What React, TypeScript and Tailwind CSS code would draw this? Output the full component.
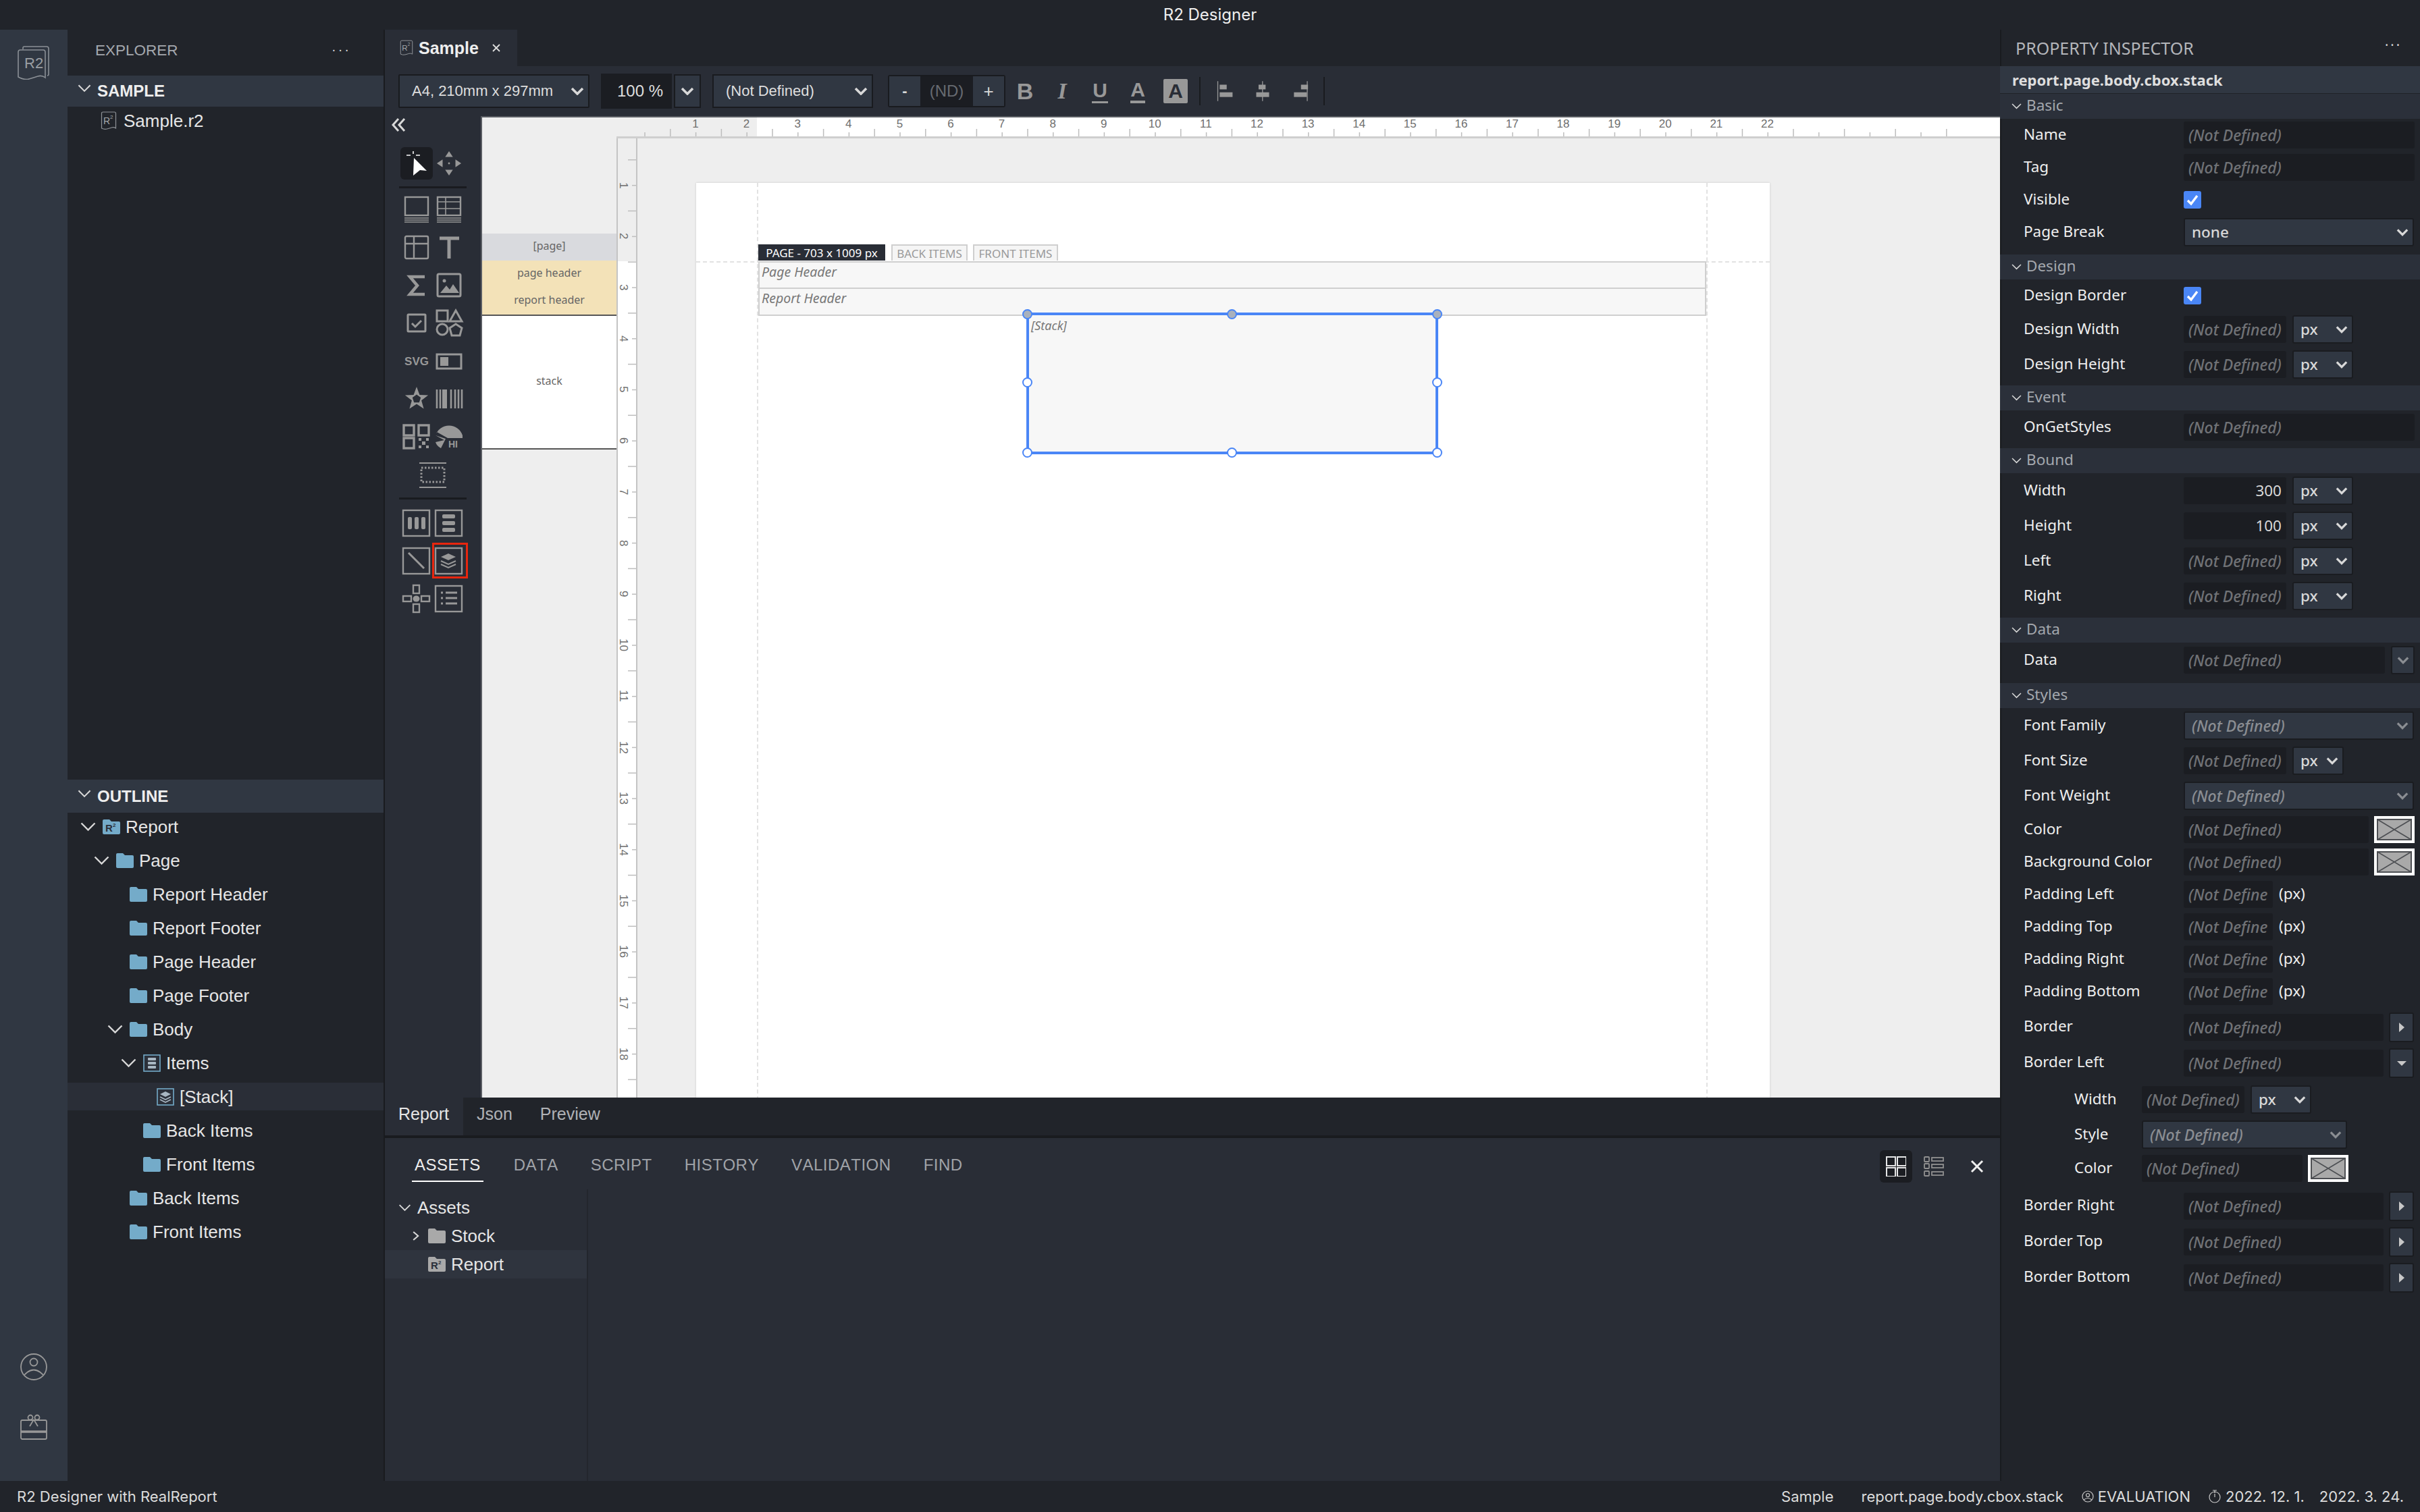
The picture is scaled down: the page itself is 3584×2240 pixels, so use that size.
import type { ReactNode } from 'react';

// --- small drawings ---

function Chevron({ className = 'w-[20px] h-[12px] text-[#d8d8d8]', width = 3.6 }: { className?: string; width?: number }) {
  return (
    <svg viewBox="0 0 20 12" className={className} fill="none" stroke="currentColor" strokeWidth={width}>
      <path d="M2 2l8 8 8-8" />
    </svg>
  );
}

function TreeArrow({ open = true, className = 'w-[23px] h-[14px]' }: { open?: boolean; className?: string }) {
  return (
    <svg viewBox="0 0 23 14" className={`${className} text-[#d8d8d8]`} fill="none" stroke="currentColor" strokeWidth={2.4}>
      {open ? <path d="M1.5 1.5l10 10 10-10" /> : <path d="M6 0l8 7-8 7" />}
    </svg>
  );
}

function Folder({ color = '#74abc9' }: { color?: string }) {
  return (
    <svg viewBox="0 0 26 22" className="w-[26px] h-[22px] shrink-0">
      <path d="M0 2q0-2 2-2h8l3 3h11q2 0 2 2v15q0 2-2 2H2q-2 0-2-2z" fill={color} />
    </svg>
  );
}

function ReportFolder({ color = '#74abc9' }: { color?: string }) {
  return (
    <svg viewBox="0 0 26 22" className="w-[26px] h-[22px] shrink-0">
      <path d="M0 2q0-2 2-2h8l3 3h11q2 0 2 2v15q0 2-2 2H2q-2 0-2-2z" fill={color} />
      <text x="4" y="18" fontSize="15" fontWeight="700" fill="#2b303a" fontFamily="Liberation Sans">R</text>
      <text x="15" y="11" fontSize="8" fontWeight="700" fill="#2b303a" fontFamily="Liberation Sans">2</text>
    </svg>
  );
}

function ItemsIcon() {
  return (
    <svg viewBox="0 0 26 26" className="w-[26px] h-[26px] shrink-0" fill="none">
      <rect x="1" y="1" width="24" height="24" stroke="#74abc9" strokeWidth="1.6" fill="#2b303a" />
      <g fill="#a8b6c2">
        <rect x="7" y="5" width="12" height="4" rx="1" />
        <rect x="7" y="11" width="12" height="4" rx="1" />
        <rect x="7" y="17" width="12" height="4" rx="1" />
      </g>
    </svg>
  );
}

function StackIcon() {
  return (
    <svg viewBox="0 0 26 26" className="w-[26px] h-[26px] shrink-0" fill="none">
      <rect x="1" y="1" width="24" height="24" stroke="#74abc9" strokeWidth="1.6" fill="#2b303a" />
      <path d="M13 5l8 4-8 4-8-4z" fill="#a8b6c2" />
      <path d="M5 13l8 4 8-4M5 17l8 4 8-4" stroke="#a8b6c2" strokeWidth="1.6" />
    </svg>
  );
}

function FileIcon({ className = 'w-[24px] h-[28px]' }: { className?: string }) {
  return (
    <svg viewBox="0 0 24 28" className={`${className} shrink-0`} fill="none" stroke="#8f9398" strokeWidth="1.2">
      <path d="M1.5 3q0-2 2-2h17q2 0 2 2v22q-3-2-6-1t-7 2-8-1z" />
      <text x="4" y="19" fontSize="14" fill="#a4a7ab" stroke="none" fontFamily="Liberation Sans">R</text>
      <text x="14" y="11" fontSize="8" fill="#a4a7ab" stroke="none" fontFamily="Liberation Sans">2</text>
    </svg>
  );
}

function Logo() {
  return (
    <svg viewBox="0 0 48 50" className="w-[48px] h-[50px]" fill="none" stroke="#8b9096" strokeWidth="1.6">
      <path d="M8 5V3q0-2 2-2h33q3 0 3 3v38q0 2-2 2" />
      <path d="M1 9q0-3 3-3h34q3 0 3 3v38q-5-4-11-2t-13 4-16-3z" />
      <text x="10" y="33" fontSize="22" fill="#9a9ea3" stroke="none" fontFamily="Liberation Sans">R2</text>
    </svg>
  );
}

const T = ({ children }: { children: ReactNode }) => (
  <svg viewBox="0 0 44 44" className="w-[44px] h-[44px]" fill="none" stroke="#989898" strokeWidth="2.4">
    {children}
  </svg>
);

const toolIcons: ReactNode[] = [
  <T key="band">
    <rect x="5" y="3" width="34" height="27" />
    <path d="M4 34h36M4 37h36M4 40h36" strokeWidth="1.4" />
  </T>,
  <T key="bandgrid">
    <rect x="5" y="3" width="34" height="27" />
    <path d="M5 10h34M17 3v27M5 20h34" strokeWidth="1.6" />
    <path d="M4 34h36M4 37h36M4 40h36" strokeWidth="1.4" />
  </T>,
  <T key="table">
    <rect x="5" y="5" width="34" height="33" rx="2" />
    <path d="M5 16h34M18 5v33" />
  </T>,
  <T key="text">
    <path d="M8 8h29M22 8v30" strokeWidth="5" />
  </T>,
  <T key="sum">
    <path d="M34 9H12l11 13-11 13h22" strokeWidth="4.5" />
  </T>,
  <T key="image">
    <rect x="5" y="5" width="34" height="33" rx="2" strokeWidth="3" />
    <circle cx="15" cy="15" r="2.5" fill="#989898" stroke="none" />
    <path d="M9 33l9-11 5 6 5-8 9 13z" fill="#989898" stroke="none" />
  </T>,
  <T key="check">
    <rect x="9" y="9" width="26" height="25" rx="1" strokeWidth="3" />
    <path d="M15 22l5 5 9-9" strokeWidth="3" />
  </T>,
  <T key="shapes">
    <rect x="4" y="3" width="16" height="16" strokeWidth="3" />
    <path d="M32 3l9 16H23z" strokeWidth="3" />
    <circle cx="12" cy="31" r="8" strokeWidth="3" />
    <path d="M32 23l9 6-3 11H26l-3-11z" strokeWidth="3" />
  </T>,
  <T key="svg">
    <text x="22" y="28" textAnchor="middle" fontSize="17" fontWeight="700" fill="#989898" stroke="none" fontFamily="Liberation Sans">SVG</text>
  </T>,
  <T key="toggle">
    <rect x="4" y="12" width="36" height="21" strokeWidth="3" />
    <rect x="9" y="16" width="12" height="13" fill="#989898" stroke="none" />
  </T>,
  <T key="star">
    <path d="M22 4l4.400 11.900 12.700.5-10 7.900 3.500 12.300L22 29.500l-10.600 7.100 3.500-12.300-10-7.900 12.700-.5z" fill="#989898" stroke="none" />
    <path d="M22 15.500l6.200 4.500-2.400 7.300h-7.600L15.800 20z" fill="#292d36" stroke="none" />
  </T>,
  <T key="barcode">
    <path d="M4 8v28M9 8v28M25 8v28M31 8v28M36 8v28M41 8v28" strokeWidth="2.600" />
    <path d="M15.500 8v28" strokeWidth="7" />
  </T>,
  <T key="qr">
    <rect x="3" y="5" width="15" height="15" strokeWidth="3.400" />
    <rect x="25" y="5" width="15" height="15" strokeWidth="3.400" />
    <rect x="3" y="24" width="15" height="15" strokeWidth="3.400" />
    <path d="M25 24h4v4h-4zM36 24h4v4h-4zM30 29h5v5h-5zM25 35h4v4h-4zM36 35h4v4h-4z" fill="#989898" stroke="none" />
  </T>,
  <T key="chart">
    <path d="M2 20A21 21 0 0 1 42 20L42 24H20L4 15z" fill="#989898" stroke="none" />
    <path d="M2 20l15 5-7 14q-6-3-8-9l13-3z" fill="#989898" stroke="none" />
    <text x="21" y="38" fontSize="14" fontWeight="700" fill="#989898" stroke="none" fontFamily="Liberation Sans">HI</text>
  </T>,
];

const layoutIcons: ReactNode[] = [
  <T key="cols">
    <rect x="2" y="3" width="39" height="38" strokeWidth="2.400" />
    <rect x="9" y="13" width="6" height="18" rx="2" fill="#989898" stroke="none" />
    <rect x="19" y="13" width="6" height="18" rx="2" fill="#989898" stroke="none" />
    <rect x="29" y="13" width="6" height="18" rx="2" fill="#989898" stroke="none" />
  </T>,
  <T key="rows">
    <rect x="2" y="3" width="39" height="38" strokeWidth="2.400" />
    <rect x="12" y="9" width="19" height="6" rx="2" fill="#989898" stroke="none" />
    <rect x="12" y="19" width="19" height="6" rx="2" fill="#989898" stroke="none" />
    <rect x="12" y="29" width="19" height="6" rx="2" fill="#989898" stroke="none" />
  </T>,
  <T key="line">
    <rect x="2" y="3" width="39" height="38" strokeWidth="2.400" />
    <path d="M10 10l23 23" strokeWidth="3" />
  </T>,
  <T key="stack">
    <rect x="2" y="3" width="39" height="38" strokeWidth="2.400" />
    <path d="M21 11l11 5-11 5-11-5z" fill="#989898" stroke="none" />
    <path d="M10 22l11 5 11-5M10 27l11 5 11-5" strokeWidth="2" />
  </T>,
  <T key="free">
    <rect x="17" y="2" width="9" height="12" strokeWidth="2.400" />
    <rect x="17" y="30" width="9" height="12" strokeWidth="2.400" />
    <rect x="2" y="18" width="12" height="8" strokeWidth="2.400" />
    <rect x="29" y="18" width="12" height="8" strokeWidth="2.400" />
    <ellipse cx="21.500" cy="22" rx="5" ry="4.500" fill="#989898" stroke="none" />
  </T>,
  <T key="list">
    <rect x="2" y="3" width="39" height="38" strokeWidth="2.400" />
    <path d="M10 13h3M10 21h3M10 29h3" strokeWidth="3" />
    <path d="M17 13h17M17 21h17M17 29h17" strokeWidth="3" />
  </T>,
];

// --- property inspector ---

// clip is only for the narrow inputs, where the reference cuts the placeholder too
function Field({ className, right, muted = true, clip, children = '(Not Defined)' }: { className: string; right?: boolean; muted?: boolean; clip?: boolean; children?: ReactNode }) {
  return (
    <div className={`${className} h-[40px] rounded-[3px] bg-[#1b1d22] px-[7px] flex items-center`}>
      <div className={`w-full whitespace-nowrap leading-[28px] ${clip ? 'overflow-hidden' : ''} ${right ? 'text-right' : ''} ${muted ? 'italic font-medium text-[23px] text-[#707276]' : 'text-[#d8d8d8]'}`}>
        {children}
      </div>
    </div>
  );
}

function Select({ className, muted, children }: { className: string; muted?: boolean; children: ReactNode }) {
  return (
    <div className={`${className} h-[42px] shrink-0 border-2 border-[#1a1c20] rounded-[3px] bg-[#303742] pl-[10px] pr-[6px] flex items-center justify-between`}>
      <span className={muted ? 'italic font-medium text-[23px] text-[#8a8d92]' : 'font-medium text-[#d8d8d8]'}>{children}</span>
      <Chevron className={muted ? 'w-[18px] h-[12px] text-[#8a8d92]' : 'w-[18px] h-[12px] text-[#d8d8d8]'} />
    </div>
  );
}

function Unit() {
  return <Select className="w-[90px] ml-[9px]">px</Select>;
}

function Swatch({ className = 'ml-[8px]' }: { className?: string }) {
  return (
    <div className={`${className} w-[60px] h-[40px] shrink-0 border-[4px] border-white bg-[#a9a9a9]`}>
      <svg viewBox="0 0 52 32" preserveAspectRatio="none" className="w-full h-full" fill="none" stroke="#4d4f53" strokeWidth="1.600">
        <rect x="1" y="1" width="50" height="30" strokeWidth="2" />
        <path d="M1 1l50 30M51 1L1 31" />
      </svg>
    </div>
  );
}

function Check() {
  return (
    <div className="w-[26px] h-[26px] rounded-[3px] bg-[#4a86f6] flex items-center justify-center">
      <svg viewBox="0 0 20 20" className="w-[20px] h-[20px]" fill="none" stroke="white" strokeWidth="3.400">
        <path d="M3 11l5 5 9-12" />
      </svg>
    </div>
  );
}

function Row({ label, h = 'h-[48px]', sub, children }: { label: string; h?: string; sub?: boolean; children?: ReactNode }) {
  return (
    <div className={`${h} flex items-center pr-[8px] ${sub ? 'pl-[110px]' : 'pl-[35px]'}`}>
      <div className={`${sub ? 'w-[100px]' : 'w-[237px]'} shrink-0 -mt-[2px] text-[#eeeeee]`}>{label}</div>
      {children}
    </div>
  );
}

function Section({ title, gap, children }: { title: string; gap: string; children: ReactNode }) {
  return (
    <div className={gap}>
      <div className="h-[37px] bg-[#2b303a] flex items-center pl-[17px] text-[#a4a8ae]">
        <TreeArrow className="w-[15px] h-[9px] mr-[7px]" />
        <span className="-mt-[3px]">{title}</span>
      </div>
      {children}
    </div>
  );
}

function BorderBtn({ open }: { open?: boolean }) {
  return (
    <div className="w-[37px] h-[44px] ml-[8px] shrink-0 rounded-[3px] border-2 border-[#1a1c20] bg-[#303742] flex items-center justify-center">
      <svg viewBox="0 0 14 14" className="w-[14px] h-[14px]" fill="#c8c8c8">
        {open ? <path d="M0 4h14L7 11z" /> : <path d="M3 0l8 7-8 7z" />}
      </svg>
    </div>
  );
}

function BorderRow({ label, open }: { label: string; open?: boolean }) {
  return (
    <Row label={label} h="h-[53px]">
      <Field className="w-[296px]" />
      <BorderBtn open={open} />
    </Row>
  );
}

function PaddingRow({ label }: { label: string }) {
  return (
    <Row label={label}>
      <Field className="w-[132px]" clip />
      <span className="ml-[9px] -mt-[2px] text-[#eeeeee]">(px)</span>
    </Row>
  );
}

function UnitRow({ label, value }: { label: string; value?: string }) {
  return (
    <Row label={label} h="h-[52px]">
      {value ? (
        <Field className="w-[152px]" right muted={false}>{value}</Field>
      ) : (
        <Field className="w-[152px]" clip />
      )}
      <Unit />
    </Row>
  );
}

function Inspector() {
  return (
    <div className="w-[622px] shrink-0 flex flex-col shadow-[inset_2px_0_0_#191b1f] font-['Noto_Sans',sans-serif] text-[22.5px] leading-none">
      <div className="h-[54px] flex items-center justify-between pl-[23px] pr-[27px]">
        <span className="text-[25px] text-[#b4b6ba]">PROPERTY INSPECTOR</span>
        <span className="text-[#d8d8d8] tracking-[3px] text-[20px] -mt-[8px]">···</span>
      </div>
      <div className="h-[41px] bg-[#303742] border-b border-[#1f2228] flex items-center pl-[18px] text-[22px] font-bold text-[#dedede]">
        report.page.body.cbox.stack
      </div>
      <Section title="Basic" gap="pb-[9px]">
        <Row label="Name"><Field className="w-[342px]" /></Row>
        <Row label="Tag"><Field className="w-[342px]" /></Row>
        <Row label="Visible"><Check /></Row>
        <Row label="Page Break"><Select className="w-[341px]">none</Select></Row>
      </Section>
      <Section title="Design" gap="pb-[5px]">
        <Row label="Design Border"><Check /></Row>
        <UnitRow label="Design Width" />
        <UnitRow label="Design Height" />
      </Section>
      <Section title="Event" gap="pb-[6px]">
        <Row label="OnGetStyles" h="h-[50px]"><Field className="w-[342px]" /></Row>
      </Section>
      <Section title="Bound" gap="pb-[6px]">
        <UnitRow label="Width" value="300" />
        <UnitRow label="Height" value="100" />
        <UnitRow label="Left" />
        <UnitRow label="Right" />
      </Section>
      <Section title="Data" gap="pb-[8px]">
        <Row label="Data" h="h-[52px]">
          <Field className="w-[298px]" />
          <div className="w-[35px] h-[42px] ml-[9px] shrink-0 rounded-[3px] border-2 border-[#1a1c20] bg-[#303742] flex items-center justify-center">
            <Chevron className="w-[18px] h-[12px] text-[#8a8d92]" />
          </div>
        </Row>
      </Section>
      <Section title="Styles" gap="">
        <Row label="Font Family" h="h-[52px]"><Select className="w-[341px]" muted>(Not Defined)</Select></Row>
        <Row label="Font Size" h="h-[52px]">
          <Field className="w-[152px]" clip />
          <Select className="w-[76px] ml-[9px]">px</Select>
        </Row>
        <Row label="Font Weight" h="h-[52px]"><Select className="w-[341px]" muted>(Not Defined)</Select></Row>
        <Row label="Color"><Field className="w-[274px]" /><Swatch /></Row>
        <Row label="Background Color"><Field className="w-[274px]" /><Swatch /></Row>
        <PaddingRow label="Padding Left" />
        <PaddingRow label="Padding Top" />
        <PaddingRow label="Padding Right" />
        <PaddingRow label="Padding Bottom" />
        <div className="h-[2px]" />
        <BorderRow label="Border" />
        <BorderRow label="Border Left" open />
        <div className="h-[2px]" />
        <Row label="Width" h="h-[52px]" sub>
          <Field className="w-[152px]" clip />
          <Unit />
        </Row>
        <Row label="Style" h="h-[52px]" sub><Select className="w-[304px]" muted>(Not Defined)</Select></Row>
        <Row label="Color" sub><Field className="w-[238px]" /><Swatch /></Row>
        <div className="h-[5px]" />
        <BorderRow label="Border Right" />
        <BorderRow label="Border Top" />
        <BorderRow label="Border Bottom" />
      </Section>
    </div>
  );
}

// --- explorer ---

type Node = { label: string; depth: number; kind: 'folder' | 'report' | 'items' | 'stack'; open?: boolean; active?: boolean };

const outline: Node[] = [
  { label: 'Report', depth: 0, kind: 'report', open: true },
  { label: 'Page', depth: 1, kind: 'folder', open: true },
  { label: 'Report Header', depth: 2, kind: 'folder' },
  { label: 'Report Footer', depth: 2, kind: 'folder' },
  { label: 'Page Header', depth: 2, kind: 'folder' },
  { label: 'Page Footer', depth: 2, kind: 'folder' },
  { label: 'Body', depth: 2, kind: 'folder', open: true },
  { label: 'Items', depth: 3, kind: 'items', open: true },
  { label: '[Stack]', depth: 4, kind: 'stack', active: true },
  { label: 'Back Items', depth: 3, kind: 'folder' },
  { label: 'Front Items', depth: 3, kind: 'folder' },
  { label: 'Back Items', depth: 2, kind: 'folder' },
  { label: 'Front Items', depth: 2, kind: 'folder' },
];

const depthPad = ['pl-[52px]', 'pl-[72px]', 'pl-[92px]', 'pl-[112px]', 'pl-[132px]'];

function OutlineRow({ node }: { node: Node }) {
  return (
    <div className={`h-[41px] mb-[9px] relative flex items-center ${depthPad[node.depth]} ${node.active ? 'bg-[#2a2e37]' : ''}`}>
      {node.open && (
        <span className="absolute -ml-[33px] flex">
          <TreeArrow />
        </span>
      )}
      {node.kind === 'folder' && <Folder />}
      {node.kind === 'report' && <ReportFolder />}
      {node.kind === 'items' && <ItemsIcon />}
      {node.kind === 'stack' && <StackIcon />}
      <span className="ml-[8px] text-[#e6e6e6]">{node.label}</span>
    </div>
  );
}

function Explorer() {
  return (
    <div className="w-[470px] shrink-0 flex flex-col border-r-2 border-[#191b1f] text-[26px] leading-none">
      <div className="h-[68px] flex items-center justify-between pl-[41px] pr-[48px]">
        <span className="text-[22.5px] -mt-[5px] text-[#a4a8ae]">EXPLORER</span>
        <span className="text-[#d8d8d8] tracking-[3px] text-[20px] -mt-[10px]">···</span>
      </div>
      <div className="h-[46px] bg-[#303742] flex items-center pl-[15px] font-bold text-[24px] text-[#eeeeee]">
        <TreeArrow className="w-[20px] h-[12px] mr-[9px] -mt-[8px]" />
        SAMPLE
      </div>
      <div className="h-[997px] pt-[7px] pl-[49px]">
        <div className="flex items-center h-[28px]">
          <FileIcon />
          <span className="ml-[10px] text-[#e6e6e6]">Sample.r2</span>
        </div>
      </div>
      <div className="h-[49px] bg-[#303742] flex items-center pl-[15px] font-bold text-[24px] text-[#eeeeee]">
        <TreeArrow className="w-[20px] h-[12px] mr-[9px] -mt-[8px]" />
        OUTLINE
      </div>
      <div>
        {outline.map((node, i) => (
          <OutlineRow key={i} node={node} />
        ))}
      </div>
    </div>
  );
}

// --- toolbar ---

function ToolGlyph({ children, w = 'w-[56px]' }: { children: ReactNode; w?: string }) {
  return <div className={`${w} h-[50px] flex items-center justify-center text-[#989898]`}>{children}</div>;
}

function AlignIcon({ x }: { x: number }) {
  return (
    <svg viewBox="0 0 30 40" className="w-[26px] h-[36px]" fill="#989898">
      <rect x={x === 0 ? 1 : x === 1 ? 14 : 27} y="3" width="1.500" height="34" />
      <rect x={x === 0 ? 5 : x === 1 ? 8 : 17} y="9" width="12" height="8" />
      <rect x={x === 0 ? 5 : x === 1 ? 4 : 5} y="22" width="22" height="8" />
    </svg>
  );
}

function Toolbar() {
  return (
    <div className="h-[74px] bg-[#292d36] flex items-center pl-[20px] text-[22px] text-[#dedede] leading-none">
      <div className="w-[283px] h-[50px] border-2 border-[#191b1f] bg-[#303742] rounded-[2px] pl-[18px] pr-[6px] flex items-center justify-between">
        A4, 210mm x 297mm
        <Chevron />
      </div>
      <div className="w-[105px] h-[52px] ml-[17px] bg-[#1b1d22] flex items-center pl-[24px] text-[24px]">100 %</div>
      <div className="w-[40px] h-[50px] ml-[3px] border-2 border-[#191b1f] bg-[#303742] flex items-center justify-center">
        <Chevron />
      </div>
      <div className="w-[238px] h-[50px] ml-[17px] border-2 border-[#191b1f] bg-[#303742] pl-[18px] pr-[6px] flex items-center justify-between">
        (Not Defined)
        <Chevron />
      </div>
      <div className="w-[174px] h-[48px] ml-[22px] border-2 border-[#191b1f] rounded-[3px] bg-[#1b1d22] flex items-center">
        <div className="w-[46px] h-full bg-[#303742] flex items-center justify-center font-bold text-[#d8d8d8]">-</div>
        <div className="flex-1 text-center text-[#666a70] text-[24px]">(ND)</div>
        <div className="w-[46px] h-full bg-[#303742] flex items-center justify-center text-[26px] text-[#d8d8d8]">+</div>
      </div>
      <ToolGlyph><span className="text-[34px] font-bold ml-[2px]">B</span></ToolGlyph>
      <ToolGlyph><span className="text-[34px] font-bold italic font-['Liberation_Serif',serif]">I</span></ToolGlyph>
      <ToolGlyph><span className="text-[30px] font-bold border-b-[3px] border-[#989898] px-[1px] leading-[32px]">U</span></ToolGlyph>
      <ToolGlyph><span className="text-[30px] font-bold border-b-[4px] border-[#989898] leading-[32px]">A</span></ToolGlyph>
      <ToolGlyph><span className="w-[36px] h-[36px] bg-[#989898] rounded-[2px] flex items-center justify-center text-[30px] font-bold text-[#292d36]">A</span></ToolGlyph>
      <div className="w-[2px] h-[42px] ml-[7px] bg-[#191b1f]" />
      <div className="flex ml-[9px]">
        <ToolGlyph w="w-[55px]"><AlignIcon x={0} /></ToolGlyph>
        <ToolGlyph w="w-[55px]"><AlignIcon x={1} /></ToolGlyph>
        <ToolGlyph w="w-[55px]"><AlignIcon x={2} /></ToolGlyph>
      </div>
      <div className="w-[2px] h-[42px] ml-[8px] bg-[#191b1f]" />
    </div>
  );
}

// --- tool column ---

function ToolColumn() {
  return (
    <div className="w-[142px] shrink-0 flex flex-col items-center bg-[#292d36]">
      <div className="h-[46px] w-full pl-[10px] pt-[2px] flex items-start text-[#d8d8d8]">
        <svg viewBox="0 0 22 22" className="w-[22px] h-[22px]" fill="none" stroke="currentColor" strokeWidth="3">
          <path d="M10 2l-8 9 8 9M19 2l-8 9 8 9" />
        </svg>
      </div>
      <div className="grid grid-cols-[48px_48px]">
        <div className="w-[48px] h-[48px] rounded-[6px] bg-[#1b1d22]">
          <svg viewBox="0 0 48 48" className="w-[48px] h-[48px]" fill="white">
            <path d="M20 16l19 19-10-1-10 8z" />
            <path d="M19 6v4M9 12h6M23 12h6" stroke="white" strokeWidth="1.600" />
          </svg>
        </div>
        <div className="w-[48px] h-[48px] flex items-center justify-center">
          <svg viewBox="0 0 40 40" className="w-[38px] h-[38px]" fill="#989898">
            <path d="M20 1l6 9H14zM20 39l6-9H14zM1 20l9-6v12zM39 20l-9-6v12z" />
            <circle cx="20" cy="20" r="1.500" />
          </svg>
        </div>
      </div>
      <div className="w-[100px] h-[3px] mt-[10px] bg-[#191b1f]" />
      <div className="grid grid-cols-[48px_48px] auto-rows-[56px] mt-[4px]">
        {toolIcons.map((icon, i) => (
          <div key={i} className="flex items-center justify-center">{icon}</div>
        ))}
      </div>
      <div className="h-[56px] mt-[1px] flex items-center justify-center">
        <svg viewBox="0 0 44 44" className="w-[44px] h-[44px]" fill="none" stroke="#989898">
          <path d="M2 4h40M2 40h40" strokeWidth="2" />
          <rect x="5" y="11" width="34" height="21" strokeWidth="3" strokeDasharray="2.500 2.500" />
        </svg>
      </div>
      <div className="w-[100px] h-[3px] mt-[5px] bg-[#191b1f]" />
      <div className="grid grid-cols-[48px_48px] auto-rows-[56px] mt-[7px]">
        {layoutIcons.map((icon, i) => (
          <div key={i} className="relative flex items-center justify-center">
            {icon}
            {i === 3 && <div className="absolute -left-[1px] top-[1px] w-[53px] h-[53px] border-[3px] border-[#e8260e]" />}
          </div>
        ))}
      </div>
    </div>
  );
}

// --- rulers and design page ---

const cms = Array.from({ length: 26 }, (_, i) => i);
const topNumbers = Array.from({ length: 22 }, (_, i) => i + 1);
const sideNumbers = Array.from({ length: 18 }, (_, i) => i + 1);

function TopRuler() {
  return (
    <div className="relative h-[31px] bg-white border-b-[3px] border-[#cfcfcf]">
      <svg width={2048} height={28} className="absolute inset-0 block">
        <rect x={0} y={0} width={208} height={28} fill="#eeeeee" />
        {cms.map((i) => {
          const x = 42 + i * 75.6;
          return (
            <g key={i} stroke="#bdbdbd" strokeWidth="1.500">
              <path d={`M${x} 22v6`} />
              <path d={`M${x + 37.8} 17v11`} />
            </g>
          );
        })}
      </svg>
      <div className="relative flex pl-[79.2px] pt-[1px] text-[17px] leading-none text-[#6f6f6f]">
        {topNumbers.map((n) => (
          <span key={n} className="w-[75.6px] shrink-0 text-center">{n}</span>
        ))}
      </div>
    </div>
  );
}

function SideRuler() {
  return (
    <div className="relative w-[31px] shrink-0 bg-white border-r-[2px] border-l-[2px] border-[#c4c4c4]">
      <svg width={27} height={1420} className="absolute inset-0 block">
        <rect x={0} y={0} width={27} height={182} fill="#eeeeee" />
        {cms.map((i) => {
          const y = -6 + i * 75.7;
          return (
            <g key={i} stroke="#bdbdbd" strokeWidth="1.500">
              <path d={`M21 ${y}h6`} />
              <path d={`M15 ${y + 37.8}h12`} />
            </g>
          );
        })}
      </svg>
      <div className="relative flex flex-col pt-[31.6px] text-[17px] leading-none text-[#6f6f6f]">
        {sideNumbers.map((n) => (
          <span key={n} className="h-[75.7px] shrink-0 w-[17px] text-center [writing-mode:vertical-rl]">{n}</span>
        ))}
      </div>
    </div>
  );
}

function Handle({ className, filled }: { className: string; filled?: boolean }) {
  return (
    <div className={`absolute ${className} w-[15px] h-[15px] rounded-full border-2 border-[#4a86f6] ${filled ? 'bg-[#a9b1bd]' : 'bg-white'}`} />
  );
}

function DesignPage() {
  return (
    <div className="relative ml-[87px] mt-[66px] w-[1590px] h-[1800px] bg-white shadow-[0_0_3px_rgba(0,0,0,0.15)] pt-[91px] pl-[92px] font-['Noto_Sans',sans-serif]">
      <div className="absolute left-[90px] top-0 bottom-0 border-l-2 border-dashed border-[#e2e2e2]" />
      <div className="absolute left-[1496px] top-0 bottom-0 border-l-2 border-dashed border-[#e2e2e2]" />
      <div className="absolute left-0 right-0 top-[116px] border-t-2 border-dashed border-[#e2e2e2]" />
      <div className="relative flex h-[24px] text-[17px] leading-none">
        <div className="w-[188px] bg-[#292d36] text-white flex items-center justify-center">PAGE - 703 x 1009 px</div>
        <div className="w-[113px] ml-[9px] border-2 border-b-0 border-[#cfcfcf] bg-[#f5f5f5] text-[#9a9a9a] flex items-center justify-center">BACK ITEMS</div>
        <div className="w-[126px] ml-[8px] border-2 border-b-0 border-[#cfcfcf] bg-[#f5f5f5] text-[#9a9a9a] flex items-center justify-center">FRONT ITEMS</div>
      </div>
      <div className="relative w-[1404px] text-[19.5px] leading-none italic text-[#777777]">
        <div className="h-[41px] mt-[1px] border-2 border-[#cfcfcf] bg-[#f7f7f7] pl-[3px] pt-[4px]">Page Header</div>
        <div className="h-[40px] border-2 border-t-0 border-[#cfcfcf] bg-[#f7f7f7] pl-[3px] pt-[4px]">Report Header</div>
      </div>
      <div className="absolute left-[489px] top-[192px] w-[610px] h-[210px] border-[4px] border-[#4a86f6] bg-[#f7f7f7] italic text-[18px] leading-none text-[#777777] pl-[3px] pt-[6px]">
        [Stack]
        <Handle filled className="-left-[10px] -top-[9px]" />
        <Handle filled className="left-[293px] -top-[9px]" />
        <Handle filled className="-right-[10px] -top-[9px]" />
        <Handle className="-left-[10px] top-[92px]" />
        <Handle className="-right-[10px] top-[92px]" />
        <Handle className="-left-[10px] -bottom-[9px]" />
        <Handle className="left-[293px] -bottom-[9px]" />
        <Handle className="-right-[10px] -bottom-[9px]" />
      </div>
    </div>
  );
}

function BandPanel() {
  return (
    <div className="w-[199px] shrink-0 bg-[#eeeeee] flex flex-col text-[16px] leading-none text-[#666666] font-['Noto_Sans',sans-serif]">
      <div className="h-[172px]" />
      <div className="h-[40px] pb-[4px] bg-[#d9dade] flex items-center justify-center">[page]</div>
      <div className="h-[40px] pb-[4px] bg-[#f3e2b8] flex items-center justify-center">page header</div>
      <div className="h-[42px] pb-[4px] bg-[#f3e2b8] border-b-2 border-[#555555] flex items-center justify-center">report header</div>
      <div className="h-[198px] pb-[4px] bg-white border-b-2 border-[#555555] flex items-center justify-center">stack</div>
    </div>
  );
}

// --- bottom panel ---

function BottomPanel() {
  const tabs = ['DATA', 'SCRIPT', 'HISTORY', 'VALIDATION', 'FIND'];
  return (
    <>
      <div className="h-[56px] bg-[#21242a] flex text-[25px] leading-none text-[#b0b2b6]">
        <div className="w-[116px] bg-[#292d36] flex items-center pl-[20px] pb-[8px] text-[#e6e6e6]">Report</div>
        <div className="flex items-center pl-[20px] pb-[8px]">Json</div>
        <div className="flex items-center pl-[41px] pb-[8px]">Preview</div>
      </div>
      <div className="h-[4px] bg-[#191b1f]" />
      <div className="flex-1 bg-[#292d36] flex flex-col">
        <div className="h-[76px] flex items-start justify-between pt-[18px] pr-[24px] relative">
          <div className="flex pl-[40px] text-[24px] tracking-[0.5px] [font-kerning:none] leading-none text-[#a0a3a8]">
            <div className="px-[4px] h-[47px] pt-[10px] border-b-2 border-white text-[#eeeeee]">ASSETS</div>
            {tabs.map((t, i) => (
              <div key={t} className={`pt-[10px] ${i === 0 ? 'ml-[45px]' : 'ml-[48px]'}`}>{t}</div>
            ))}
          </div>
          <div className="flex items-center">
            <div className="w-[48px] h-[48px] rounded-[6px] bg-[#1b1d22] flex items-center justify-center">
              <svg viewBox="0 0 30 30" className="w-[30px] h-[30px]" fill="none" stroke="#e6e6e6" strokeWidth="2">
                <rect x="1" y="1" width="13" height="13" />
                <rect x="17" y="1" width="13" height="13" />
                <rect x="1" y="17" width="13" height="13" />
                <rect x="17" y="17" width="13" height="13" />
              </svg>
            </div>
            <div className="w-[64px] h-[48px] flex items-center justify-center">
              <svg viewBox="0 0 30 30" className="w-[30px] h-[30px]" fill="none" stroke="#909090" strokeWidth="1.800">
                <rect x="1" y="1" width="7" height="7" rx="1" />
                <rect x="1" y="11" width="7" height="7" rx="1" />
                <rect x="1" y="22" width="7" height="7" rx="1" />
                <rect x="12" y="2" width="17" height="5" />
                <rect x="12" y="12" width="17" height="5" />
                <rect x="12" y="23" width="17" height="5" />
              </svg>
            </div>
            <svg viewBox="0 0 20 20" className="w-[20px] h-[20px] ml-[22px]" fill="none" stroke="#eeeeee" strokeWidth="3">
              <path d="M2 2l16 16M18 2L2 18" />
            </svg>
          </div>
        </div>
        <div className="flex-1 w-[301px] border-r-2 border-[#23262d] pt-[6px] text-[26px] leading-none text-[#e6e6e6]">
          <div className="h-[42px] flex items-center pl-[20px]">
            <TreeArrow className="w-[19px] h-[11px]" />
            <span className="ml-[9px]">Assets</span>
          </div>
          <div className="h-[42px] flex items-center pl-[37px]">
            <TreeArrow open={false} className="w-[20px] h-[18px]" />
            <span className="mr-[8px] ml-[7px]"><Folder color="#a9a9a9" /></span>
            Stock
          </div>
          <div className="h-[42px] flex items-center pl-[64px] bg-[#2f343e]">
            <span className="mr-[8px]"><ReportFolder color="#a9a9a9" /></span>
            Report
          </div>
        </div>
      </div>
    </>
  );
}

// --- status bar ---

function StatusBar() {
  return (
    <div className="h-[46px] shrink-0 flex items-center justify-between pl-[25px] pr-[24px] font-['Inter',sans-serif] text-[22px] leading-none text-[#dcdcdc]">
      <span>R2 Designer with RealReport</span>
      <div className="flex items-center">
        <span>Sample</span>
        <span className="ml-[41px]">report.page.body.cbox.stack</span>
        <svg viewBox="0 0 18 18" className="w-[18px] h-[18px] ml-[27px] mr-[6px]" fill="none" stroke="#c8c8c8" strokeWidth="1.200">
          <circle cx="9" cy="9" r="8" />
          <circle cx="9" cy="7" r="2.500" />
          <path d="M3 14q6-5 12 0" />
        </svg>
        <span>EVALUATION</span>
        <svg viewBox="0 0 18 20" className="w-[18px] h-[20px] ml-[27px] mr-[7px]" fill="none" stroke="#c8c8c8" strokeWidth="1.200">
          <circle cx="9" cy="11" r="8" />
          <path d="M6 1h6M9 1v4M9 11V6" />
        </svg>
        <span>2022. 12. 1.</span>
        <span className="ml-[22px]">2022. 3. 24.</span>
      </div>
    </div>
  );
}

export default function App() {
  return (
    <div className="w-[3584px] h-[2240px] flex flex-col overflow-hidden bg-[#21242a] font-['Liberation_Sans',sans-serif]">
      <div className="h-[44px] shrink-0 flex items-center justify-center font-['Inter',sans-serif] text-[24px] leading-none text-[#eeeeee]">
        R2 Designer
      </div>

      <div className="flex-1 flex min-h-0">
        <div className="w-[100px] shrink-0 bg-[#303742] flex flex-col items-center justify-between pt-[24px] pb-[61px]">
          <Logo />
          <div className="flex flex-col items-center gap-[50px]">
            <svg viewBox="0 0 40 40" className="w-[40px] h-[40px]" fill="none" stroke="#989898" strokeWidth="1.800">
              <circle cx="20" cy="20" r="19" />
              <circle cx="20" cy="13" r="5.500" />
              <path d="M6 32q14-15 28 0" />
            </svg>
            <svg viewBox="0 0 40 38" className="w-[40px] h-[38px]" fill="none" stroke="#989898" strokeWidth="1.800">
              <rect x="1" y="9" width="38" height="28" rx="2" />
              <path d="M1 26h38" strokeWidth="3.500" />
              <circle cx="15" cy="5" r="3.500" />
              <circle cx="25" cy="5" r="3.500" />
              <path d="M20 8l-6 10M20 8l6 10" />
            </svg>
          </div>
        </div>

        <Explorer />

        <div className="flex-1 min-w-0 flex flex-col">
          <div className="h-[54px] flex">
            <div className="w-[196px] bg-[#292d36] flex items-center pl-[22px]">
              <FileIcon className="w-[20px] h-[24px]" />
              <span className="ml-[8px] text-[25px] leading-none font-bold text-[#eeeeee]">Sample</span>
              <svg viewBox="0 0 12 12" className="w-[12px] h-[12px] ml-[20px]" fill="none" stroke="#dedede" strokeWidth="1.800">
                <path d="M1 1l10 10M11 1L1 11" />
              </svg>
            </div>
          </div>
          <Toolbar />
          <div className="h-[1454px] flex shrink-0 overflow-hidden">
            <ToolColumn />
            <div className="flex-1 min-w-0 flex border-l-2 border-t-2 border-[#5a5d63] overflow-hidden">
              <BandPanel />
              <div className="flex-1 min-w-0 flex flex-col">
                <TopRuler />
                <div className="flex-1 min-h-0 flex">
                  <SideRuler />
                  <div className="flex-1 min-w-0 bg-[#eeeeee] overflow-hidden">
                    <DesignPage />
                  </div>
                </div>
              </div>
            </div>
          </div>
          <BottomPanel />
        </div>

        <Inspector />
      </div>

      <StatusBar />
    </div>
  );
}
